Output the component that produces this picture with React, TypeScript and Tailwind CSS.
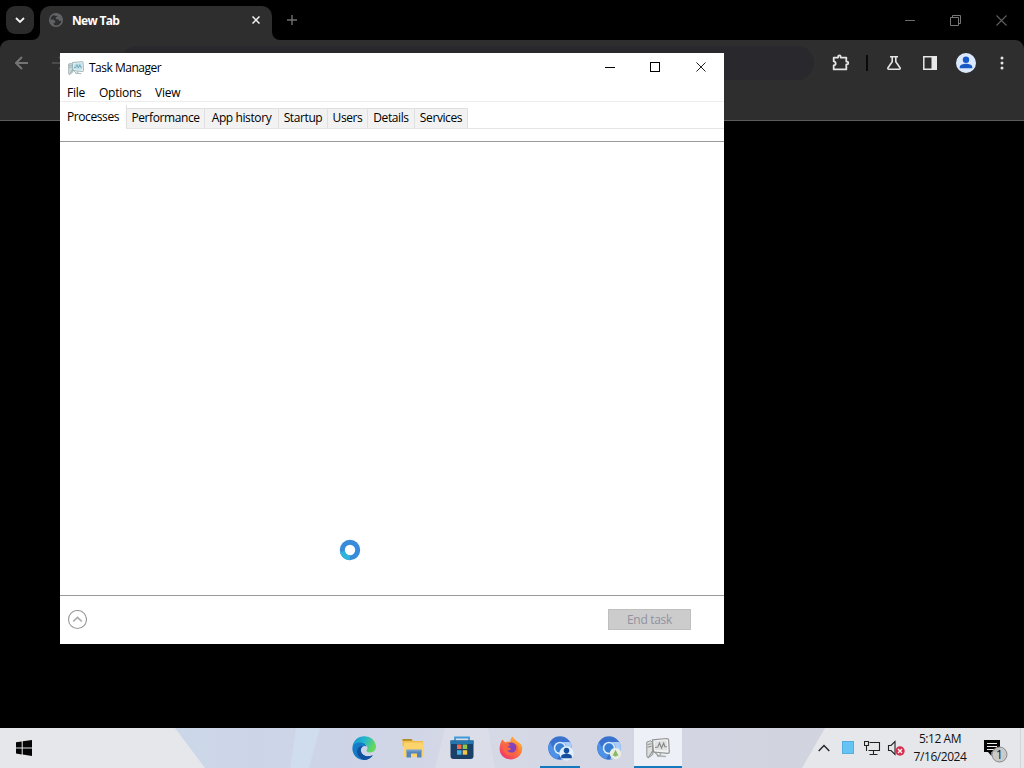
import type { ReactNode } from 'react';

type Tab = {
  label: string;
  width: string;
};

const tabs: Tab[] = [
  { label: 'Performance', width: 'w-[78px]' },
  { label: 'App history', width: 'w-[74px]' },
  { label: 'Startup', width: 'w-[49px]' },
  { label: 'Users', width: 'w-[40px]' },
  { label: 'Details', width: 'w-[47px]' },
  { label: 'Services', width: 'w-[53px]' },
];

function GlobeIcon() {
  return (
    <svg viewBox="0 0 16 16" className="h-4 w-4 shrink-0" fill="none" aria-hidden>
      <circle cx="8" cy="8" r="6.3" stroke="#66676a" strokeWidth="1.4" />
      <path d="M2 7.5h3.6l1.7 1.8v1.5H5.5l1.2 3.4C3.6 13.8 1.7 11 2 7.5ZM6.5 2h4.8l2.4 3.2.5 3.6-2.9.2-1.1-1.7H7.8V5.1h1.8L8.4 3.7H6z" fill="#606164" />
    </svg>
  );
}

function MonitorIcon({ muted = false }: { muted?: boolean }) {
  const frame = muted ? '#929494' : '#8fa6ab';
  return (
    <svg viewBox="0 0 24 24" className="h-full w-full" fill="none" aria-hidden>
      <path d="M6.5 3.8 21 2.5q1.5 0 1.6 1.4l.7 12q0 1.4-1.4 1.4L7.5 16Z" fill={muted ? '#f1f2f2' : '#e5f2f4'} stroke={frame} strokeWidth="1.2" />
      <path d="m8.7 5.6 11.8-1 .5 10-11.8-.5z" fill={muted ? '#dfe0e1' : '#bfe3ea'} />
      <path d="m9 11.5 2.8-.5 1.7-4 2 5 2.2-5 1.2 3.8h2" stroke={muted ? '#858787' : '#5c98a6'} strokeWidth="1.1" />
      <path d="m15 17 .3 2.2 4.7.5v1.6l-9-.6v-1.5l2.5-.2V17z" fill={muted ? '#b2b4b4' : '#aac0c4'} />
      <path d="m.8 6 3.9-1.2 1.6 1.4.6 12.2L2 22 .8 20z" fill={muted ? '#dddede' : '#ccd9db'} stroke={frame} strokeWidth="1" />
      <path d="m1.5 8.5 4-.8M1.5 11l4-.6M2.5 21.5l4.4-7.2 6 6" stroke={frame} strokeWidth="1.1" />
    </svg>
  );
}

function CloseIcon({ color, size = 'h-[11px] w-[11px]' }: { color: string; size?: string }) {
  return (
    <svg viewBox="0 0 11 11" className={size} aria-hidden>
      <path d="m.5.5 10 10m0-10-10 10" stroke={color} strokeWidth="1.1" />
    </svg>
  );
}

function BrowserHeader() {
  return (
    <header className="h-[121px] w-full">
      <div className="flex h-10 items-start bg-black">
        <button type="button" aria-label="Search tabs" className="mt-1.5 ml-1.5 flex h-7 w-7 items-center justify-center rounded-[9px] bg-[#2b2b2b]">
          <svg viewBox="0 0 10 6" className="h-1.5 w-2.5" fill="none" aria-hidden>
            <path d="m1 1 4 4 4-4" stroke="#f2f2f2" strokeWidth="1.8" />
          </svg>
        </button>
        <div className="relative mt-1.5 ml-1.5 flex h-[34px] w-[232px] items-center rounded-t-[10px] bg-[#2e2e2e] pb-1.5 pl-2">
          <svg viewBox="0 0 8 8" className="absolute bottom-0 -left-2 h-2 w-2" aria-hidden>
            <path d="M8 0v8H0a8 8 0 0 0 8-8Z" fill="#2e2e2e" />
          </svg>
          <svg viewBox="0 0 8 8" className="absolute -right-2 bottom-0 h-2 w-2" aria-hidden>
            <path d="M0 0v8h8a8 8 0 0 1-8-8Z" fill="#2e2e2e" />
          </svg>
          <GlobeIcon />
          <span className="mt-0.5 ml-2 text-[12px] leading-4 font-bold tracking-[-0.7px] text-white">New Tab</span>
          <span className="mr-3 ml-auto">
            <svg viewBox="0 0 8 8" className="h-2 w-2" aria-hidden>
              <path d="m.5.5 7 7m0-7-7 7" stroke="#f5f5f5" strokeWidth="1.5" />
            </svg>
          </span>
        </div>
        <svg viewBox="0 0 10 10" className="mt-[15px] ml-[15px] h-2.5 w-2.5" aria-hidden>
          <path d="M5 0v10M0 5h10" stroke="#707070" strokeWidth="1.4" />
        </svg>
        <div className="mt-[15px] mr-[17px] ml-auto flex items-center gap-[35px]">
          <span className="h-px w-2.5 bg-[#6a6a6a]" />
          <svg viewBox="0 0 11 11" className="h-[11px] w-[11px]" fill="none" aria-hidden>
            <path d="M.5 2.5h8v8h-8zM2.5 2.5v-2h8v8h-2" stroke="#777" />
          </svg>
          <CloseIcon color="#606060" />
        </div>
      </div>
      <div className="flex h-[81px] items-start rounded-t-[9px] border-b border-[#5c5c5c] bg-[#2e2e2e]">
        <div className="flex h-[46px] w-[120px] items-center gap-[23px] pl-[15px]">
          <svg viewBox="0 0 14 14" className="h-3.5 w-3.5" fill="none" aria-hidden>
            <path d="M13 7H1.5m5.5-6L1 7l6 6" stroke="#747474" strokeWidth="2" />
          </svg>
          <svg viewBox="0 0 14 14" className="h-3.5 w-3.5" fill="none" aria-hidden>
            <path d="M0 7h12M7 1l6 6-6 6" stroke="#555" strokeWidth="1.7" />
          </svg>
        </div>
        <div className="mt-1.5 h-[34px] w-[694px] rounded-full bg-[#29292d]" />
        <div className="flex h-[46px] flex-1 items-center">
          <svg viewBox="0 0 18 18" className="mb-px ml-[18px] h-[18px] w-[18px]" fill="none" aria-hidden>
            <path d="M1.7 3.6h4.4V2.7a1.3 1.3 0 0 1 2.6 0v.9h5.6v4h.6a1.4 1.4 0 0 1 0 2.8h-.6v5H1.7v-4c2.6-.3 2.6-3.7 0-4z" stroke="#e4e4e4" strokeWidth="1.8" strokeLinejoin="round" />
          </svg>
          <span className="ml-4 h-4 w-0.5 bg-[#090909]" />
          <svg viewBox="0 0 16 16" className="ml-[18px] h-4 w-4" fill="none" aria-hidden>
            <path d="M4 1.7h8M6.2 2v4.8L2 12.7c-.7 1 .1 1.6.9 1.6h10.2c.8 0 1.6-.6.9-1.6L9.8 6.8V2" stroke="#e4e4e4" strokeWidth="1.6" />
          </svg>
          <svg viewBox="0 0 16 16" className="ml-5 h-4 w-4" fill="none" aria-hidden>
            <path d="M1.8 1.8h12.4v12.4H1.8z" stroke="#e8e8e8" strokeWidth="1.5" />
            <path d="M9.5 1.5H15v13H9.5z" fill="#e8e8e8" />
          </svg>
          <svg viewBox="0 0 20 20" className="ml-[18px] h-5 w-5" aria-hidden>
            <circle cx="10" cy="10" r="10" fill="#dce9fc" />
            <circle cx="10" cy="6.8" r="3.2" fill="#1959c5" />
            <path d="M3.7 15.3v-1.4c0-2 3.6-3.2 6.3-3.2s6.3 1.2 6.3 3.2v1.4z" fill="#1959c5" />
          </svg>
          <svg viewBox="0 0 4 16" className="ml-6 h-4 w-1" fill="#e5e5e5" aria-hidden>
            <circle cx="2" cy="3" r="1.5" />
            <circle cx="2" cy="8" r="1.5" />
            <circle cx="2" cy="13" r="1.5" />
          </svg>
        </div>
      </div>
    </header>
  );
}

function BusyCursor() {
  return (
    <svg viewBox="0 0 22 22" className="absolute top-[486px] left-[279px] h-[22px] w-[22px]" fill="none" aria-hidden>
      <circle cx="11" cy="11" r="7.7" stroke="#388bd9" strokeWidth="5" />
      <path d="M3.4 12.5a7.7 7.7 0 0 0 7.6 6.2" stroke="#2fb4dc" strokeWidth="5" />
    </svg>
  );
}

function TaskManager() {
  return (
    <main className="absolute top-[53px] left-[60px] flex h-[591px] w-[664px] flex-col bg-white text-[12px] leading-4 text-black">
      <div className="flex h-[30px] shrink-0 items-center pl-2">
        <span className="h-4 w-4"><MonitorIcon /></span>
        <h1 className="ml-[5px] tracking-[-0.5px]">Task Manager</h1>
        <div className="mr-[18px] mb-0.5 ml-auto flex items-center gap-[35px]">
          <span className="h-px w-2.5 bg-black" />
          <span className="h-2.5 w-2.5 border border-black" />
          <span className="ml-px"><CloseIcon color="#222" size="h-2.5 w-2.5" /></span>
        </div>
      </div>
      <nav className="flex h-[19px] shrink-0 items-center border-b border-[#ededed] pt-0.5 pl-[7px] tracking-[-0.25px]">
        <span className="w-8">File</span>
        <span className="w-14">Options</span>
        <span>View</span>
      </nav>
      <div className="flex h-[27px] shrink-0 items-end border-b border-[#e5e5e5] tracking-[-0.4px]">
        <div className="-mb-px flex h-6 w-[67px] items-center justify-center border-r border-[#dedede] bg-white pb-px">Processes</div>
        {tabs.map((tab) => (
          <div
            key={tab.label}
            className={`flex h-5 items-center justify-center border-t border-r border-[#e0e0e0] bg-[#f2f2f2] pb-px ${tab.width}`}
          >
            {tab.label}
          </div>
        ))}
      </div>
      <div className="h-[13px] shrink-0 border-b border-[#999]" />
      <div className="flex-1" />
      <footer className="flex h-[49px] shrink-0 items-center border-t border-[#999] pr-[33px] pb-px pl-[7px]">
        <svg viewBox="0 0 20 20" className="h-5 w-5" fill="none" aria-hidden>
          <circle cx="10.5" cy="9.5" r="9" stroke="#999" strokeWidth="1.1" />
          <path d="m6.2 11.5 4.3-4 4.3 4" stroke="#aaa" strokeWidth="1.7" />
        </svg>
        <button type="button" disabled className="ml-auto h-[21px] w-[83px] border border-[#bfbfbf] bg-[#cccccc] pt-px leading-[18px] tracking-[-0.3px] text-[#9292a0]">
          End task
        </button>
      </footer>
      <BusyCursor />
    </main>
  );
}

function EdgeIcon() {
  return (
    <svg viewBox="0 0 24 24" className="h-6 w-6" aria-hidden>
      <defs>
        <linearGradient id="edge-top" x1="0" y1="0" x2="1" y2="0.4">
          <stop stopColor="#168ed5" />
          <stop offset=".55" stopColor="#27b9c9" />
          <stop offset="1" stopColor="#66d85d" />
        </linearGradient>
      </defs>
      <path d="M.5 10.6C1.4 4.3 6.3.3 12.2.3 18.8.3 24 5 24 10.8c0 3.3-2.5 5.7-6 5.7-3.1 0-4.1-1.3-3.3-2.4 2.3-3-.6-6.6-4.5-6.6C5.9 7.5 2 9 .5 10.6Z" fill="url(#edge-top)" />
      <path d="M.4 12C.6 8.3 4.8 6.1 9 6.6c3 .3 5 2 5.7 4-2.3-1.5-5.9.3-5.8 3.6.1 4.7 5.7 7.9 11.9 5.1C18.5 22.4 15.4 24 12 24 5.3 24 .1 18.5.4 12Z" fill="#157bc8" />
      <path d="M7 10.9c-4.2 4.7-1.3 10.9 4.8 13 4.2.2 7.3-1.9 9.1-4.6-6 2.6-12.2-.3-12.2-5.4 0-1.5.7-2.7 1.7-3.5-1.2-.4-2.4-.2-3.4.5Z" fill="#124f9d" />
    </svg>
  );
}

function FolderIcon() {
  return (
    <svg viewBox="0 0 24 24" className="h-6 w-6" aria-hidden>
      <path d="M1.5 3h9l2 2H22v5H1.5z" fill="#efbd4a" />
      <path d="M1.5 3h9l1 1.8h-10z" fill="#b18b27" />
      <path d="M3 6.5h20V21H3z" fill="#fdd36e" />
      <path d="M5.5 14h15v7.5h-4.5v-4h-6v4H5.5z" fill="#5584bd" />
      <path d="M5.5 13.5h15v2h-15z" fill="#729fcd" />
    </svg>
  );
}

function StoreIcon() {
  return (
    <svg viewBox="0 0 24 24" className="h-6 w-6" aria-hidden>
      <path d="M5 5V1.5h14V5" fill="none" stroke="#3f9bd6" strokeWidth="1.8" />
      <path d="M.5 4.5h23V20a3 3 0 0 1-3 3h-17a3 3 0 0 1-3-3z" fill="#1b4067" />
      <path d="M.5 4.5h23V8H.5z" fill="#2477ad" />
      <path d="M7 8.5h4.5V13H7z" fill="#f26a49" />
      <path d="M12.7 8.5h4.5V13h-4.5z" fill="#8fc74b" />
      <path d="M7 14.2h4.5v4.5H7z" fill="#42b0e5" />
      <path d="M12.7 14.2h4.5v4.5h-4.5z" fill="#f4c44b" />
    </svg>
  );
}

function FirefoxIcon() {
  return (
    <svg viewBox="0 0 24 24" className="h-6 w-6" aria-hidden>
      <defs>
        <linearGradient id="fire" x1="1" y1="0" x2="0.2" y2="1">
          <stop stopColor="#ffcf3c" />
          <stop offset=".45" stopColor="#ff8134" />
          <stop offset="1" stopColor="#ef2f71" />
        </linearGradient>
      </defs>
      <path d="m3.3 3.4 3 3c1.7-1 3.7-1.2 5.4-.7-.5-2 .3-4.1 2.1-5.2.7 2.2 2.4 2.8 4.4 5.1C22 7.3 23.4 10 23.2 13c-.4 6-5.3 10.4-11.3 10.4S.6 18.8.6 12.9c0-3.7 1.1-7 2.7-9.5Z" fill="url(#fire)" />
      <circle cx="12.5" cy="12" r="5.4" fill="#8142bd" />
      <path d="M5 8c2.8-1 5.2-.2 6.6 1.4-1.7.2-2.6.8-3 1.8 1.9.1 3.5.9 3 2.3-1 1.1-2.4 1-3.6.6 2 3.6 8 3.2 9.2-1.2.5-2-.1-4.1-1.2-5.6 4.9 3 4.5 11.5-3.2 12.2C5.8 20 2.2 13.2 5 8Z" fill="#fa6542" />
    </svg>
  );
}

function ChromiumIcon({ person = false }: { person?: boolean }) {
  return (
    <svg viewBox="0 0 26 26" className="ml-px h-[26px] w-[26px]" aria-hidden>
      <circle cx="12" cy="13" r="11.8" fill="#3972ce" />
      <path d="M12 7h10.2A11.5 11.5 0 0 1 13 24.5l4.6-8.3A6 6 0 0 0 12 7Z" fill="#a9cdf7" />
      <path d="M2 7.3 6.7 16l5.4 3L9 24.1A11.5 11.5 0 0 1 2 7.3Z" fill="#4e91e7" />
      <circle cx="12" cy="13" r="6.3" fill="#d9e9fc" />
      <circle cx="12" cy="13" r="4.7" fill="#367fd5" />
      <circle cx="18.5" cy="18.5" r={person ? 7.2 : 5.7} fill={person ? '#e2effc' : '#e7eee1'} />
      {person ? (
        <path d="M18.5 12.8a2.8 2.8 0 1 1 0 5.6 2.8 2.8 0 0 1 0-5.6Zm-5.3 10.4v-1.6c0-3.8 10.6-3.8 10.6 0v1.6z" fill="#164f9d" />
      ) : (
        <path d="m18.5 14.8 3 6h-6zM17.5 17h2v4.5h-2z" fill="#8ab76c" />
      )}
    </svg>
  );
}

function TaskButton({ label, active = false, children }: { label: string; active?: boolean; children: ReactNode }) {
  return (
    <button
      type="button"
      aria-label={label}
      className={active ? 'flex h-full w-12 items-center justify-center border-b-2 border-[#1479bd] bg-[#edf0f6]' : 'flex h-full w-12 items-center justify-center'}
    >
      {children}
    </button>
  );
}

function SystemTray() {
  return (
    <div className="ml-auto flex h-full items-center">
      <svg viewBox="0 0 12 8" className="mr-3 h-2 w-3" fill="none" aria-hidden>
        <path d="m.7 7 5.3-5.5L11.3 7" stroke="#222" strokeWidth="1.4" />
      </svg>
      <span className="mr-2.5 mb-0.5 h-[13px] w-3 border border-[#54afe0] bg-[#65c4f3]" />
      <svg viewBox="0 0 17 16" className="mr-1.5 h-4 w-[17px]" fill="none" aria-hidden>
        <path d="M5.5 2.5h10v8h-11M9.5 11v3M5.5 14.5h8M.5 1.5h4v4h-4zM2.5 6v5" stroke="#222" strokeWidth="1.1" />
      </svg>
      <svg viewBox="0 0 18 16" className="mr-2 h-4 w-[18px]" fill="none" aria-hidden>
        <path d="M1.5 5.5H4l4-4v13l-4-4H1.5z" stroke="#222" strokeWidth="1.1" />
        <circle cx="13" cy="11" r="4.7" fill="#d62e4e" />
        <path d="m11 9 4 4m0-4-4 4" stroke="#fff" strokeWidth="1.3" />
      </svg>
      <div className="w-[54px] text-center text-[12px] leading-[18px] tracking-[-0.45px] whitespace-nowrap text-[#111]">
        <div>5:12 AM</div>
        <div>7/16/2024</div>
      </div>
      <svg viewBox="0 0 26 26" className="mt-1 mr-[14px] ml-[17px] h-[26px] w-[26px]" aria-hidden>
        <path d="M0 3h16v12H7.5v4L4 15H0z" fill="#050505" />
        <path d="M3 6.5h10M3 9.5h10M3 12.5h7" stroke="#eee" />
        <circle cx="15.5" cy="17.5" r="7.5" fill="#c8c8c8" fillOpacity=".92" stroke="#888" />
        <text x="15.5" y="21.7" fontFamily="Open Sans" fontSize="12" textAnchor="middle" fill="#111">1</text>
      </svg>
    </div>
  );
}

function Taskbar() {
  return (
    <footer className="relative flex h-10 w-full items-center overflow-hidden bg-[#e5e7ea]">
      <svg viewBox="0 0 1024 40" className="absolute inset-0 h-full w-full" preserveAspectRatio="none" aria-hidden>
        <defs>
          <linearGradient id="bar">
            <stop stopColor="#cbd7e8" />
            <stop offset=".25" stopColor="#ced4e7" />
            <stop offset=".5" stopColor="#d5d8e5" />
            <stop offset="1" stopColor="#d1d3df" />
          </linearGradient>
        </defs>
        <path d="M175 0h650l-23 40H205z" fill="url(#bar)" />
        <path d="m296 0-6 40h19l11-40z" fill="#cfddef" />
        <path d="m445 0-10 40h60l-7-40z" fill="#dfe1ea" opacity=".65" />
        <path d="M1020.5 0v40" stroke="#d3d5d7" />
      </svg>
      <svg viewBox="0 0 16 16" className="relative ml-4 h-4 w-4" aria-label="Start">
        <path d="M0 2.3 5.7 1.5v5.9H0zM6.7 1.3 16 0v7.4H6.7zM0 8.4h5.7v6L0 13.6zM6.7 8.4H16V16l-9.3-1.4z" fill="#050505" />
      </svg>
      <div className="relative ml-[308px] flex h-full gap-px">
        <TaskButton label="Edge"><EdgeIcon /></TaskButton>
        <TaskButton label="File Explorer"><FolderIcon /></TaskButton>
        <TaskButton label="Store"><StoreIcon /></TaskButton>
        <TaskButton label="Firefox"><FirefoxIcon /></TaskButton>
        <div className="flex h-full w-12 items-center justify-center px-1">
          <div className="flex h-full w-10 items-center justify-center border-b-2 border-[#1479bd] pt-0.5"><ChromiumIcon person /></div>
        </div>
        <TaskButton label="Chromium"><ChromiumIcon /></TaskButton>
        <TaskButton label="Task Manager" active><span className="mt-0.5 h-6 w-6"><MonitorIcon muted /></span></TaskButton>
      </div>
      <div className="relative ml-auto h-full"><SystemTray /></div>
    </footer>
  );
}

export default function App() {
  return (
    <div className="relative flex h-[768px] w-[1024px] flex-col overflow-hidden bg-black font-['Open_Sans',sans-serif]">
      <BrowserHeader />
      <div className="flex-1" />
      <TaskManager />
      <Taskbar />
    </div>
  );
}
